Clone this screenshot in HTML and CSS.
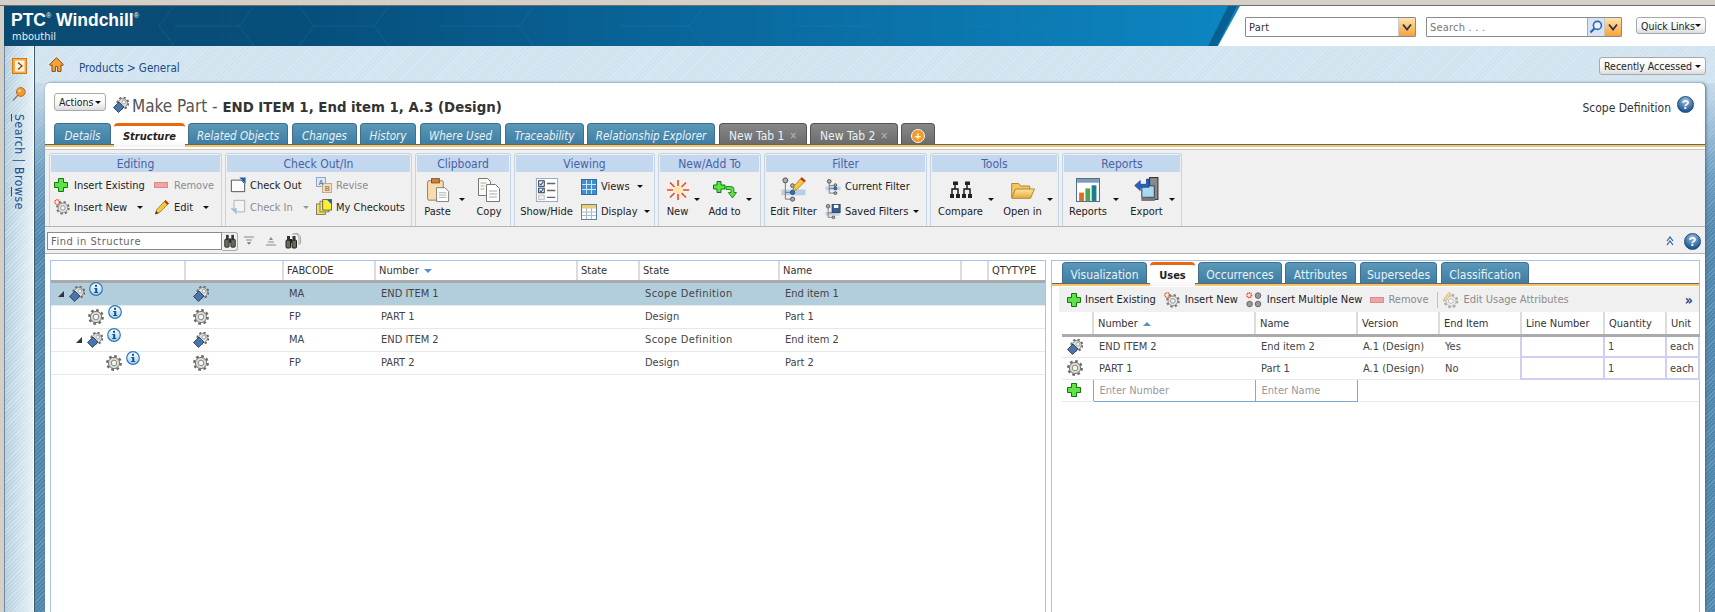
FILE: index.html
```html
<!DOCTYPE html>
<html lang="en">
<head>
    <meta charset="UTF-8">
    <title>Windchill - Make Part</title>
    <link rel="stylesheet" href="styles.css">
</head>
<body>
    <svg class="defs" aria-hidden="true">
        <defs>
            <linearGradient id="infoFill" x1="0" y1="0" x2="0" y2="1"><stop offset="0" stop-color="#ffffff"/><stop offset="1" stop-color="#a9d0ee"/></linearGradient>
            <linearGradient id="folderFill" x1="0" y1="0" x2="0" y2="1"><stop offset="0" stop-color="#fbe7a0"/><stop offset="1" stop-color="#e8a93c"/></linearGradient>
            <symbol id="gear" viewBox="0 0 16 16">
                <circle cx="8" cy="8" r="6.6" fill="none" stroke="#6a6a6a" stroke-width="2.6" stroke-dasharray="2.6 2.58"/>
                <circle cx="8" cy="8" r="5.6" fill="#dcdcd4" stroke="#777" stroke-width="1"/>
                <circle cx="8" cy="8" r="2.8" fill="#f4f4f0" stroke="#888" stroke-width="1"/>
            </symbol>
            <symbol id="part" viewBox="0 0 16 16">
                <circle cx="9.8" cy="6.2" r="5.4" fill="none" stroke="#6a6a6a" stroke-width="2.2" stroke-dasharray="2.2 2.04"/>
                <circle cx="9.8" cy="6.2" r="4.6" fill="#e2e2da" stroke="#777" stroke-width=".8"/>
                <circle cx="10.8" cy="5.2" r="1.8" fill="#f8f8f4" stroke="#888" stroke-width=".7"/>
                <polygon points="0.5,10.5 6,5 11,10 5.5,15.5" fill="#4b74a8" stroke="#1c3560" stroke-width=".8"/>
            </symbol>
            <symbol id="gearNew" viewBox="0 0 18 18">
                <circle cx="10" cy="10" r="6.4" fill="none" stroke="#777" stroke-width="2.6" stroke-dasharray="2.5 2.53"/>
                <circle cx="10" cy="10" r="5.4" fill="#e6e6e2" stroke="#888" stroke-width="1"/>
                <circle cx="10" cy="10" r="2.6" fill="#f6f6f2" stroke="#888" stroke-width="1"/>
                <circle cx="3.5" cy="3.5" r="2.6" fill="none" stroke="#e8431a" stroke-width="1.6" stroke-dasharray="1 .7"/>
            </symbol>
            <symbol id="gearsNew" viewBox="0 0 16 16">
                <g fill="#999" stroke="#555" stroke-width=".8"><circle cx="12" cy="3.6" r="2.8"/><circle cx="3.6" cy="12" r="2.8"/><circle cx="12" cy="12" r="2.8"/></g>
                <circle cx="3.2" cy="3.2" r="2.3" fill="none" stroke="#e8431a" stroke-width="1.6" stroke-dasharray="1 .6"/>
            </symbol>
            <symbol id="gearEdit" viewBox="0 0 18 18">
                <circle cx="9" cy="10" r="6" fill="none" stroke="#aaa" stroke-width="2.6" stroke-dasharray="2.4 2.31"/>
                <circle cx="9" cy="10" r="5" fill="#eee" stroke="#bbb"/>
                <circle cx="9" cy="10" r="2.4" fill="#f8f8f8" stroke="#bbb"/>
                <polygon points="2,8 7,1.5 9,3 4,9.5 1.5,10.5" fill="#f1dca0" stroke="#c8a878" stroke-width=".7"/>
            </symbol>
            <symbol id="info" viewBox="0 0 14 14">
                <circle cx="7" cy="7" r="6.3" fill="url(#infoFill)" stroke="#2c78b8" stroke-width="1.2"/>
                <rect x="6" y="2.8" width="2" height="2" fill="#14528f"/>
                <path d="M5.3 6h2.9v4h1v1.1H5.2V10h1V7.1h-.9z" fill="#14528f"/>
            </symbol>
            <symbol id="plus" viewBox="0 0 14 14">
                <polygon points="4.5,.5 9.5,.5 9.5,4.5 13.5,4.5 13.5,9.5 9.5,9.5 9.5,13.5 4.5,13.5 4.5,9.5 .5,9.5 .5,4.5 4.5,4.5" fill="#62e04a" stroke="#0d7a10"/>
            </symbol>
            <symbol id="minus" viewBox="0 0 14 14">
                <rect x=".5" y="4.5" width="13" height="5" fill="#f0a4a4" stroke="#d49090"/>
            </symbol>
            <symbol id="pencil" viewBox="0 0 18 18">
                <polygon points="13,1.5 16.5,5 6,15.5 1.5,17 3,12" fill="#f5c93c" stroke="#8c6414" stroke-width=".8"/>
                <polygon points="13,1.5 16.5,5 15,6.5 11.5,3" fill="#c8281e"/>
                <polygon points="1.5,17 2.5,13.5 5,16" fill="#333"/>
            </symbol>
            <symbol id="checkOut" viewBox="0 0 18 18">
                <path d="M1.5 3.5h11l4 4v9h-15z" fill="#fbfbfb" stroke="#444"/>
                <polygon points="10.5,.5 17.5,.5 17.5,7.5" fill="#1f5fa8"/>
            </symbol>
            <symbol id="checkIn" viewBox="0 0 18 18">
                <path d="M4.5 1.5h12v13h-8l-4-4z" fill="#f4f4f4" stroke="#aaa"/>
                <polygon points=".5,10.5 7.5,10.5 7.5,17.5" fill="#9fc0e0"/>
            </symbol>
            <symbol id="revise" viewBox="0 0 16 16">
                <rect x=".5" y=".5" width="9" height="9" fill="#dfe8f4" stroke="#8ea6c6"/>
                <rect x="6.5" y="6.5" width="9" height="9" fill="#f2dcc4" stroke="#c4a888"/>
                <text x="2.6" y="7.8" class="svg-letter" fill="#6a86ae">A</text>
                <text x="8.8" y="13.8" class="svg-letter" fill="#a88058">B</text>
            </symbol>
            <symbol id="myCheckouts" viewBox="0 0 18 18">
                <rect x=".5" y="5.5" width="10" height="12" fill="#f4e04a" stroke="#777"/>
                <rect x="4.5" y="2.5" width="10" height="12" fill="#f8ea50" stroke="#777"/>
                <path d="M7.5 .5h10v12H7.5z" fill="#ffee2a" stroke="#555"/>
                <polygon points="12,.5 17.5,.5 17.5,6" fill="#1f5fa8"/>
            </symbol>
            <symbol id="paste" viewBox="0 0 24 26">
                <rect x=".7" y="3" width="17" height="21" rx="1.5" fill="#f7dcb0" stroke="#9c7440"/>
                <rect x="5" y=".7" width="8.5" height="4.6" fill="#c8843c" stroke="#80541e"/>
                <path d="M10.5 10.5h9l4 4v11h-13z" fill="#fff" stroke="#777"/>
                <path d="M13 16h8M13 18.5h8M13 21h8" stroke="#aaa"/>
            </symbol>
            <symbol id="copy" viewBox="0 0 22 24">
                <path d="M.5 .5h9l3 3v14H.5z" fill="#fbfbf6" stroke="#777"/>
                <path d="M8.5 6.5h9l4 4v13h-13z" fill="#fff" stroke="#777"/>
                <path d="M2.5 5h6M2.5 8h4M2.5 11h4M11 13h8M11 16h8M11 19h8" stroke="#aaa"/>
            </symbol>
            <symbol id="showHide" viewBox="0 0 24 26">
                <rect x=".5" y=".5" width="23" height="25" fill="#fff" stroke="#8ea8c8"/>
                <rect x="3" y="3" width="6" height="6" fill="#fff" stroke="#223"/>
                <rect x="3" y="11" width="6" height="5" fill="#fff" stroke="#223"/>
                <rect x="3" y="18.5" width="6" height="5" fill="#eee" stroke="#bbb"/>
                <path d="M4 6l1.5 1.5L8 4M4 13.5l1.5 1.5L8 12" stroke="#1f5fa8" fill="none" stroke-width="1.2"/>
                <path d="M12 6h9M12 13.5h9M12 21h9" stroke="#666" stroke-width="1.6"/>
            </symbol>
            <symbol id="views" viewBox="0 0 16 16">
                <rect x=".5" y=".5" width="15" height="15" fill="#3f8fd0" stroke="#2a6ca8"/>
                <path d="M5.5 1v14M10.5 1v14M1 5.5h14M1 10.5h14" stroke="#cfe4f4"/>
            </symbol>
            <symbol id="display" viewBox="0 0 16 16">
                <rect x=".5" y=".5" width="15" height="15" fill="#fff" stroke="#5a82aa"/>
                <rect x="1" y="1" width="14" height="3.5" fill="#f2cc6a"/>
                <path d="M5.5 4v11M10.5 4v11M1 8h14M1 11.5h14" stroke="#a8bccc"/>
            </symbol>
            <symbol id="burst" viewBox="0 0 22 20">
                <g stroke-width="1.6" stroke="#f04a1a"><path d="M11 0v6M11 14v6M0 10h6M16 10h6M3 2.5l4.5 4.5M14.5 13l4.5 4.5M19 2.5l-4.5 4.5M7.5 13L3 17.5"/></g>
                <circle cx="11" cy="10" r="3.6" fill="#ffe69a"/>
            </symbol>
            <symbol id="addTo" viewBox="0 0 24 18">
                <polygon points="4,.5 8,.5 8,4 12,4 12,8 8,8 8,11.5 4,11.5 4,8 .5,8 .5,4 4,4" fill="#62e04a" stroke="#0d7a10"/>
                <path d="M13 5.5h5a3 3 0 0 1 3 3v3h2.5L19.5 17l-4.2-5.5H18V9.4a.9.9 0 0 0-.9-.9H13z" fill="#62e04a" stroke="#0d7a10" stroke-width=".8"/>
            </symbol>
            <symbol id="editFilter" viewBox="0 0 26 26">
                <rect x="0" y="13" width="25" height="6" fill="#b8cde4"/>
                <path d="M4 5v18M4 16h6M4 23h6" stroke="#777" fill="none"/>
                <circle cx="4" cy="3.5" r="2.6" fill="#aaa" stroke="#555"/>
                <circle cx="11.5" cy="16" r="2.2" fill="#2f6fc0" stroke="#1a4a90"/>
                <circle cx="11.5" cy="23" r="2.2" fill="#aaa" stroke="#555"/>
                <circle cx="11.5" cy="9" r="2" fill="#aaa" stroke="#555"/>
                <polygon points="21,.5 25,4 16,13 12,14 13,9.5" fill="#f5c93c" stroke="#8c6414" stroke-width=".7"/>
                <polygon points="21,.5 25,4 23.5,5.5 19.5,2" fill="#c8281e"/>
            </symbol>
            <symbol id="currentFilter" viewBox="0 0 16 17">
                <rect x="0" y="8" width="16" height="4" fill="#c0d2e6"/>
                <path d="M4 3v12M4 7h6M4 10h6M4 15h6" stroke="#777" fill="none"/>
                <circle cx="4" cy="2.5" r="2" fill="#aaa" stroke="#555"/>
                <circle cx="10.5" cy="6.5" r="1.5" fill="#aaa" stroke="#555"/>
                <circle cx="10.5" cy="10" r="1.5" fill="#2f6fc0" stroke="#1a4a90"/>
                <circle cx="10.5" cy="15" r="1.5" fill="#aaa" stroke="#555"/>
            </symbol>
            <symbol id="savedFilter" viewBox="0 0 17 18">
                <rect x="0" y="9" width="16" height="4" fill="#c0d2e6"/>
                <path d="M3 3v12M3 10h5M3 15h5" stroke="#777" fill="none"/>
                <circle cx="3" cy="2.5" r="2" fill="#aaa" stroke="#555"/>
                <circle cx="9" cy="15" r="1.5" fill="#aaa" stroke="#555"/>
                <rect x="7.5" y=".5" width="9" height="9" fill="#39608e" stroke="#22406a"/>
                <rect x="9.5" y="1" width="5" height="3.5" fill="#fff"/>
            </symbol>
            <symbol id="compare" viewBox="0 0 24 18">
                <g fill="none" stroke="#111" stroke-width="1.4">
                    <path d="M6 3v5M3 14V8h6v6M18 3v5M15 14V8h6v6"/>
                </g>
                <g fill="#222"><rect x="4" y=".5" width="5" height="3.5"/><rect x="16" y=".5" width="5" height="3.5"/><rect x="1" y="13" width="4" height="4"/><rect x="7" y="13" width="4" height="4"/><rect x="13" y="13" width="4" height="4"/><rect x="19" y="13" width="4" height="4"/></g>
            </symbol>
            <symbol id="folder" viewBox="0 0 24 18">
                <path d="M.7 16.5V2.5h7l2 2.5h9v3" fill="#f3c660" stroke="#b8862c"/>
                <polygon points="4.5,8 23.5,8 19.5,17.3 .7,17.3" fill="url(#folderFill)" stroke="#b8862c"/>
            </symbol>
            <symbol id="reports" viewBox="0 0 23 23">
                <rect x=".5" y=".5" width="22" height="22" fill="#fff" stroke="#51708e"/>
                <rect x="1" y="1" width="21" height="3.5" fill="#7e9cb8"/>
                <rect x="3" y="14" width="4.6" height="8" fill="#e06a24"/>
                <rect x="9" y="10" width="4.6" height="12" fill="#4aa84a"/>
                <rect x="15" y="7" width="4.6" height="15" fill="#1e7f8c"/>
            </symbol>
            <symbol id="export" viewBox="0 0 25 24">
                <rect x="15" y=".5" width="8" height="21" fill="#8a8a8a" stroke="#333"/>
                <rect x="7.5" y="8.5" width="12" height="11" fill="#a8d8f4" stroke="#444"/>
                <rect x="7" y="20" width="13" height="3" fill="#777"/>
                <path d="M12 2v5H6V3.5L.7 8.2 6 13V9.8h8.4V2z" fill="#2a62c0" stroke="#123a80" stroke-width=".7"/>
            </symbol>
            <symbol id="binoc" viewBox="0 0 14 16">
                <rect x="1" y="6" width="5" height="9" rx="1" fill="#6a6a5a" stroke="#222"/>
                <rect x="8" y="6" width="5" height="9" rx="1" fill="#6a6a5a" stroke="#222"/>
                <rect x="2.5" y="1" width="3" height="6" fill="#333"/>
                <rect x="8.5" y="1" width="3" height="6" fill="#333"/>
                <rect x="6" y="5" width="2" height="5" fill="#222"/>
            </symbol>
            <symbol id="binocs" viewBox="0 0 16 16">
                <path d="M7 1h5l2 3v8M9 .5h4l2.5 3.500v7" fill="none" stroke="#aaa"/>
                <rect x="1" y="7" width="4.5" height="8" rx="1" fill="#6a6a5a" stroke="#222"/>
                <rect x="7" y="7" width="4.5" height="8" rx="1" fill="#6a6a5a" stroke="#222"/>
                <rect x="2" y="3" width="3" height="5" fill="#333"/>
                <rect x="7.5" y="3" width="3" height="5" fill="#333"/>
                <rect x="5" y="6" width="2" height="4" fill="#222"/>
            </symbol>
            <symbol id="home" viewBox="0 0 15 15">
                <path d="M7.5 .7L.6 7.6l1.4 1.2 1-1V14.400h3.4V9.6h2.2v4.800H12V7.800l1 1 1.400-1.200z" fill="#f2a33a" stroke="#8e4a08"/>
            </symbol>
            <symbol id="toggle" viewBox="0 0 15 16">
                <rect x=".5" y=".5" width="14" height="15" fill="#f4a84a" stroke="#d07a18"/>
                <rect x="3" y="2.5" width="9.5" height="11" fill="#fff4e0"/>
                <path d="M6 4.5L10 8l-4 3.5" fill="none" stroke="#8a4a0c" stroke-width="1.4"/>
            </symbol>
            <symbol id="pin" viewBox="0 0 14 14">
                <path d="M7 7L1 13.5" stroke="#8c7a5c" stroke-width="1.4"/>
                <circle cx="8.8" cy="5" r="4.4" fill="#ee9a3a" stroke="#c06c14"/>
                <circle cx="7.6" cy="3.8" r="1.3" fill="#fbd9a0"/>
            </symbol>
            <symbol id="lens" viewBox="0 0 14 14">
                <circle cx="8.4" cy="5.4" r="4" fill="#e8f2fb" stroke="#2a68b4" stroke-width="1.6"/>
                <path d="M5.4 8.4L1.4 12.6" stroke="#2a68b4" stroke-width="2.2"/>
            </symbol>
            <symbol id="vee" viewBox="0 0 10 8">
                <path d="M1 1.5L5 6.5l4-5" fill="none" stroke="#333" stroke-width="1.8"/>
            </symbol>
        </defs>
    </svg>

    <div class="top-strip"></div>
    <div class="masthead">
        <div class="brand">
            <svg class="hex" viewBox="0 0 1236 40" preserveAspectRatio="none" aria-hidden="true">
                <path d="M170 0l-15 20 15 20M250 0l-15 20h-65M250 40l-15-20M385 0l-15 20 15 20M370 20h-60M310 20l-15-20M310 20l-15 20M530 0l-15 20 15 20M515 20h-80M700 0l-15 20 15 20M685 20h-70M880 0l-15 20 15 20M865 20h-75M1050 0l-15 20 15 20M1035 20h-70" fill="none" stroke="#2d8cc0" stroke-opacity=".25"/>
                <polygon points="1224,0 1233,0 1213,40 1204,40" fill="#0a5f92"/>
            </svg>
            <div class="logo">PTC<sup>®</sup> Windchill<sup>®</sup></div>
            <div class="user">mbouthil</div>
        </div>
        <div class="head-tools">
            <div class="combo combo-type">
                <input class="combo-input" value="Part">
                <span class="orange-btn"><svg class="vee"><use href="#vee"/></svg></span>
            </div>
            <div class="combo combo-search">
                <input class="combo-input" placeholder="Search . . .">
                <span class="lens-btn"><svg class="i14"><use href="#lens"/></svg></span>
                <span class="orange-btn"><svg class="vee"><use href="#vee"/></svg></span>
            </div>
            <div class="menu-btn quick">Quick Links <i class="caret"></i></div>
        </div>
    </div>

    <div class="shell">
        <aside class="rail">
            <svg class="rail-toggle"><use href="#toggle"/></svg>
            <svg class="rail-pin"><use href="#pin"/></svg>
            <div class="rail-text"><u>S</u>earch | Bro<u>w</u>se</div>
        </aside>

        <div class="workspace">
            <div class="crumbs">
                <svg class="i15"><use href="#home"/></svg>
                <div class="crumb-links">Products &gt; General</div>
                <div class="menu-btn recent">Recently Accessed <i class="caret"></i></div>
            </div>

            <div class="card">
                <div class="title-row">
                    <div class="menu-btn actions">Actions <i class="caret"></i></div>
                    <svg class="i16 title-icon"><use href="#part"/></svg>
                    <div class="title">Make Part - <b>END ITEM 1, End item 1, A.3 (Design)</b></div>
                    <div class="scope">Scope Definition</div>
                    <span class="help">?</span>
                </div>

                <div class="tabs main-tabs">
                    <div class="tab t-details">Details</div>
                    <div class="tab t-structure active">Structure</div>
                    <div class="tab t-related">Related Objects</div>
                    <div class="tab t-changes">Changes</div>
                    <div class="tab t-history">History</div>
                    <div class="tab t-used">Where Used</div>
                    <div class="tab t-trace">Traceability</div>
                    <div class="tab t-rel">Relationship Explorer</div>
                    <div class="tab grey t-new1">New Tab 1 <span class="x">×</span></div>
                    <div class="tab grey t-new2">New Tab 2 <span class="x">×</span></div>
                    <div class="tab grey t-add"><span class="add-dot">+</span></div>
                </div>
                <div class="gold"></div>

                <div class="ribbon">
                    <section class="group g-edit">
                        <h3>Editing</h3>
                        <div class="group-body">
                            <div class="stack tight w-100">
                                <div class="item"><span class="ico"><svg class="i14"><use href="#plus"/></svg></span>Insert Existing</div>
                                <div class="item"><span class="ico"><svg class="i16"><use href="#gearNew"/></svg></span>Insert New<i class="caret gap10"></i></div>
                            </div>
                            <div class="stack tight">
                                <div class="item off"><span class="ico"><svg class="i14"><use href="#minus"/></svg></span>Remove</div>
                                <div class="item"><span class="ico"><svg class="i16"><use href="#pencil"/></svg></span>Edit<i class="caret gap10"></i></div>
                            </div>
                        </div>
                    </section>
                    <section class="group g-check">
                        <h3>Check Out/In</h3>
                        <div class="group-body">
                            <div class="stack tight w-86">
                                <div class="item"><span class="ico"><svg class="i16"><use href="#checkOut"/></svg></span>Check Out</div>
                                <div class="item off"><span class="ico"><svg class="i16"><use href="#checkIn"/></svg></span>Check In<i class="caret gap10 pale"></i></div>
                            </div>
                            <div class="stack tight">
                                <div class="item off"><span class="ico"><svg class="i16"><use href="#revise"/></svg></span>Revise</div>
                                <div class="item"><span class="ico"><svg class="i16"><use href="#myCheckouts"/></svg></span>My Checkouts</div>
                            </div>
                        </div>
                    </section>
                    <section class="group g-clip">
                        <h3>Clipboard</h3>
                        <div class="group-body bigs">
                            <div class="pair">
                                <div class="big w-31"><span class="big-ico"><svg class="b24"><use href="#paste"/></svg></span>Paste</div>
                                <i class="caret big-caret"></i>
                            </div>
                            <div class="big w-26"><span class="big-ico"><svg class="b24"><use href="#copy"/></svg></span>Copy</div>
                        </div>
                    </section>
                    <section class="group g-view">
                        <h3>Viewing</h3>
                        <div class="group-body bigs">
                            <div class="big w-51"><span class="big-ico"><svg class="b24"><use href="#showHide"/></svg></span>Show/Hide</div>
                            <div class="stack">
                                <div class="item"><span class="ico"><svg class="i16"><use href="#views"/></svg></span>Views<i class="caret gap7"></i></div>
                                <div class="item"><span class="ico"><svg class="i16"><use href="#display"/></svg></span>Display<i class="caret gap7"></i></div>
                            </div>
                        </div>
                    </section>
                    <section class="group g-new">
                        <h3>New/Add To</h3>
                        <div class="group-body bigs">
                            <div class="pair">
                                <div class="big w-21"><span class="big-ico"><svg class="b22"><use href="#burst"/></svg></span>New</div>
                                <i class="caret big-caret"></i>
                            </div>
                            <div class="pair">
                                <div class="big w-31"><span class="big-ico"><svg class="b24"><use href="#addTo"/></svg></span>Add to</div>
                                <i class="caret big-caret"></i>
                            </div>
                        </div>
                    </section>
                    <section class="group g-filter">
                        <h3>Filter</h3>
                        <div class="group-body bigs">
                            <div class="big w-45"><span class="big-ico"><svg class="b26"><use href="#editFilter"/></svg></span>Edit Filter</div>
                            <div class="stack">
                                <div class="item"><span class="ico"><svg class="i16"><use href="#currentFilter"/></svg></span>Current Filter</div>
                                <div class="item"><span class="ico"><svg class="i16"><use href="#savedFilter"/></svg></span>Saved Filters<i class="caret gap5"></i></div>
                            </div>
                        </div>
                    </section>
                    <section class="group g-tools">
                        <h3>Tools</h3>
                        <div class="group-body bigs">
                            <div class="pair">
                                <div class="big w-43"><span class="big-ico"><svg class="b24"><use href="#compare"/></svg></span>Compare</div>
                                <i class="caret big-caret"></i>
                            </div>
                            <div class="pair">
                                <div class="big w-37"><span class="big-ico"><svg class="b24"><use href="#folder"/></svg></span>Open in</div>
                                <i class="caret big-caret"></i>
                            </div>
                        </div>
                    </section>
                    <section class="group g-reports">
                        <h3>Reports</h3>
                        <div class="group-body bigs">
                            <div class="pair">
                                <div class="big w-38"><span class="big-ico"><svg class="b24"><use href="#reports"/></svg></span>Reports</div>
                                <i class="caret big-caret"></i>
                            </div>
                            <div class="pair">
                                <div class="big w-33"><span class="big-ico"><svg class="b26"><use href="#export"/></svg></span>Export</div>
                                <i class="caret big-caret"></i>
                            </div>
                        </div>
                    </section>
                </div>

                <div class="find-bar">
                    <input class="find-input" placeholder="Find in Structure">
                    <span class="find-btn"><svg class="i14"><use href="#binoc"/></svg></span>
                    <span class="find-arrow">
                        <svg class="i10" viewBox="0 0 10 10"><path d="M0 1h10M2 4h6M3.500 7h3" stroke="#888" fill="none"/><path d="M3 6l2 3 2-3z" fill="#888"/></svg>
                    </span>
                    <span class="find-arrow">
                        <svg class="i10" viewBox="0 0 10 10"><path d="M0 9h10M2 6h6" stroke="#888" fill="none"/><path d="M3 4l2-3 2 3z" fill="#888"/></svg>
                    </span>
                    <span class="find-multi"><svg class="i16"><use href="#binocs"/></svg></span>
                    <span class="collapse">
                        <svg class="i10" viewBox="0 0 10 10"><path d="M2 5l3-4 3 4M2 9l3-4 3 4" fill="none" stroke="#2a62a0" stroke-width="1.2"/></svg>
                    </span>
                    <span class="help">?</span>
                </div>

                <div class="panes">
                    <div class="pane left-pane">
                        <table class="grid tree-grid">
                            <thead>
                                <tr><th></th><th></th><th>FABCODE</th><th>Number <i class="sort down"></i></th><th>State</th><th>State</th><th>Name</th><th></th><th>QTYTYPE</th></tr>
                            </thead>
                            <tbody>
                                <tr class="selected">
                                    <td><div class="tree lvl0"><i class="twist"></i><svg class="i16"><use href="#part"/></svg><svg class="i14 info"><use href="#info"/></svg></div></td>
                                    <td><svg class="i16 col-ico"><use href="#part"/></svg></td><td>MA</td><td>END ITEM 1</td><td></td><td class="scope-cell">Scope Definition</td><td>End item 1</td><td></td><td></td>
                                </tr>
                                <tr>
                                    <td><div class="tree lvl1"><svg class="i16"><use href="#gear"/></svg><svg class="i14 info"><use href="#info"/></svg></div></td>
                                    <td><svg class="i16 col-ico"><use href="#gear"/></svg></td><td>FP</td><td>PART 1</td><td></td><td>Design</td><td>Part 1</td><td></td><td></td>
                                </tr>
                                <tr>
                                    <td><div class="tree lvl2"><i class="twist"></i><svg class="i16"><use href="#part"/></svg><svg class="i14 info"><use href="#info"/></svg></div></td>
                                    <td><svg class="i16 col-ico"><use href="#part"/></svg></td><td>MA</td><td>END ITEM 2</td><td></td><td class="scope-cell">Scope Definition</td><td>End item 2</td><td></td><td></td>
                                </tr>
                                <tr>
                                    <td><div class="tree lvl3"><svg class="i16"><use href="#gear"/></svg><svg class="i14 info"><use href="#info"/></svg></div></td>
                                    <td><svg class="i16 col-ico"><use href="#gear"/></svg></td><td>FP</td><td>PART 2</td><td></td><td>Design</td><td>Part 2</td><td></td><td></td>
                                </tr>
                            </tbody>
                        </table>
                    </div>

                    <div class="pane right-pane">
                        <div class="tabs sub-tabs">
                            <div class="tab t-vis">Visualization</div>
                            <div class="tab t-uses active">Uses</div>
                            <div class="tab t-occ">Occurrences</div>
                            <div class="tab t-attr">Attributes</div>
                            <div class="tab t-super">Supersedes</div>
                            <div class="tab t-class">Classification</div>
                        </div>
                        <div class="gold"></div>
                        <div class="uses-bar">
                            <span class="ubtn u-exist"><svg class="i14"><use href="#plus"/></svg>Insert Existing</span>
                            <span class="ubtn u-new"><svg class="i16"><use href="#gearNew"/></svg>Insert New</span>
                            <span class="ubtn u-multi"><svg class="i16"><use href="#gearsNew"/></svg>Insert Multiple New</span>
                            <span class="ubtn u-rem off"><svg class="i14"><use href="#minus"/></svg>Remove</span>
                            <span class="ubar-sep"></span>
                            <span class="ubtn off"><svg class="i18"><use href="#gearEdit"/></svg>Edit Usage Attributes</span>
                            <span class="more">»</span>
                        </div>
                        <table class="grid uses-grid">
                            <thead>
                                <tr><th></th><th>Number <i class="sort up"></i></th><th>Name</th><th>Version</th><th>End Item</th><th>Line Number</th><th>Quantity</th><th>Unit</th></tr>
                            </thead>
                            <tbody>
                                <tr>
                                    <td><svg class="i16"><use href="#part"/></svg></td><td class="num-cell">END ITEM 2</td><td>End item 2</td><td>A.1 (Design)</td><td>Yes</td>
                                    <td class="edit"></td><td class="edit">1</td><td class="edit">each</td>
                                </tr>
                                <tr>
                                    <td><svg class="i16"><use href="#gear"/></svg></td><td class="num-cell">PART 1</td><td>Part 1</td><td>A.1 (Design)</td><td>No</td>
                                    <td class="edit"></td><td class="edit">1</td><td class="edit">each</td>
                                </tr>
                                <tr class="add-row">
                                    <td><svg class="i14"><use href="#plus"/></svg></td>
                                    <td class="enter">Enter Number</td><td class="enter">Enter Name</td><td colspan="5"></td>
                                </tr>
                            </tbody>
                        </table>
                    </div>
                </div>
            </div>
        </div>
    </div>
</body>
</html>
```

FILE: styles.css
```css
*{
    box-sizing:border-box;
}
html,body{
    margin:0;
    padding:0;
    height:612px;
    overflow:hidden;
}
body{
    display:flex;
    flex-direction:column;
    background:#d4d0c8;
    font-family:"DejaVu Sans Condensed","DejaVu Sans",sans-serif;
    font-stretch:condensed;
    font-size:11px;
    color:#333;
}
svg{
    display:block;
    flex:none;
}
.defs{
    width:0;
    height:0;
    position:absolute;
}
.svg-letter{
    font-size:7px;
    font-family:"Liberation Sans",sans-serif;
    font-weight:bold;
}
.i10{width:10px;height:10px;}
.i14{width:14px;height:14px;}
.i15{width:15px;height:15px;}
.i16{width:16px;height:16px;}
.i18{width:18px;height:18px;}
.b22{width:22px;height:20px;}
.b24{width:24px;height:24px;}
.b26{width:26px;height:25px;}

.top-strip{
    height:6px;
    flex:none;
    border-bottom:1px solid #6e6e6e;
}

/* header */
.masthead{
    height:40px;
    flex:none;
    margin-left:4px;
    background:#fff;
    display:flex;
}
.brand{
    width:1236px;
    position:relative;
    padding:4px 0 0 7px;
    color:#fff;
    background:linear-gradient(90deg,#0b4a70 0,#064f7c 25%,#0a6a9f 60%,#0d86c2 100%);
    clip-path:polygon(0 0,100% 0,1214px 100%,0 100%);
}
.hex{
    position:absolute;
    left:0;
    top:0;
    width:100%;
    height:100%;
}
.logo{
    position:relative;
    font-family:"Liberation Sans",sans-serif;
    font-stretch:normal;
    font-weight:bold;
    font-size:17.5px;
    line-height:20px;
}
.logo sup{
    font-size:7px;
    line-height:0;
    vertical-align:8px;
    font-weight:normal;
}
.user{
    position:relative;
    font-size:11px;
    line-height:14px;
    margin-left:1px;
    color:#e4eff6;
}
.head-tools{
    flex:1;
    display:flex;
    align-items:flex-start;
    padding:11px 9px 0 5px;
}
.combo{
    display:flex;
    height:20px;
    border:1px solid #8a8a8a;
    background:#fff;
    border-radius:1px;
}
.combo-type{
    width:171px;
    margin-right:10px;
}
.combo-search{
    width:196px;
    margin-right:14px;
}
.combo-input{
    flex:1;
    min-width:0;
    border:0;
    outline:0;
    padding:0 3px;
    font:inherit;
    font-size:11px;
    letter-spacing:.2px;
    color:#333;
    background:none;
}
.combo-input::placeholder{
    color:#777;
}
.orange-btn{
    width:17px;
    display:flex;
    align-items:center;
    justify-content:center;
    background:linear-gradient(#fde3b0,#f6a23c);
    border-left:1px solid #c8c8c8;
}
.lens-btn{
    width:17px;
    display:flex;
    align-items:center;
    justify-content:center;
    background:#d8e4f2;
    border-left:1px solid #aaa;
}
.vee{
    width:10px;
    height:8px;
}
.menu-btn{
    display:flex;
    align-items:center;
    justify-content:space-between;
    height:18px;
    padding:0 4px;
    border:1px solid #a8a8a8;
    border-radius:3px;
    background:linear-gradient(#fff 0,#f6f6f6 60%,#dcdcdc 100%);
    color:#222;
    font-size:10.5px;
    white-space:nowrap;
}
.quick{
    width:70px;
    height:17px;
}
.recent{
    width:107px;
    margin-left:auto;
}
.actions{
    width:52px;
}
.caret{
    display:inline-block;
    flex:none;
    width:0;
    height:0;
    border-left:3px solid transparent;
    border-right:3px solid transparent;
    border-top:3px solid #111;
}
.caret.pale{
    border-top-color:#999;
}

/* left rail and page background */
.shell{
    flex:1;
    min-height:0;
    display:flex;
    margin-left:4px;
}
.rail{
    width:30px;
    flex:none;
    display:flex;
    flex-direction:column;
    align-items:center;
    padding-top:12px;
    border-left:1px solid #6e8aa0;
    border-right:1px solid #fff;
    background:
        repeating-linear-gradient(135deg,rgba(255,255,255,.3) 0 1px,transparent 1px 3px),
        linear-gradient(90deg,#b4cedf,#e4eff5);
}
.rail-toggle{
    width:15px;
    height:16px;
}
.rail-pin{
    width:14px;
    height:14px;
    margin-top:13px;
}
.rail-text{
    margin-top:13px;
    writing-mode:vertical-rl;
    color:#1c4f8e;
    font-size:12px;
    letter-spacing:.6px;
    line-height:14px;
}
.workspace{
    flex:1;
    min-width:0;
    display:flex;
    flex-direction:column;
    border-left:1px solid #3c5a72;
    background:
        repeating-linear-gradient(135deg,rgba(255,255,255,.16) 0 1px,transparent 1px 3px),
        linear-gradient(#d3e5f0 0,#c3d9e8 40px,#6b9dc0 130px,#4f86ad 190px);
}
.crumbs{
    height:37px;
    flex:none;
    display:flex;
    align-items:flex-start;
    padding:11px 9px 0 14px;
    background:
        repeating-linear-gradient(135deg,rgba(255,255,255,.2) 0 1px,transparent 1px 3px),
        #d0e3ef;
}
.crumb-links{
    margin-left:15px;
    margin-top:4px;
    line-height:15px;
    font-size:11.5px;
    color:#1c4a8a;
}

/* card */
.card{
    flex:1;
    min-height:0;
    display:flex;
    flex-direction:column;
    width:1660px;
    margin-left:10px;
    background:#fff;
    border-radius:5px 5px 0 0;
    box-shadow:1px 0 3px #4d6f8a;
}
.title-row{
    height:40px;
    flex:none;
    display:flex;
    align-items:flex-start;
    padding:10px 11px 0 9px;
}
.title-icon{
    margin:4px 0 0 7px;
}
.title{
    margin-left:3px;
    margin-top:1px;
    font-size:17px;
    line-height:24px;
    color:#555;
}
.title b{
    font-size:14.8px;
    color:#333;
}
.scope{
    margin-left:auto;
    margin-top:8px;
    font-size:12px;
    line-height:14px;
}
.help{
    width:17px;
    height:17px;
    margin-left:6px;
    margin-top:3px;
    border-radius:50%;
    background:radial-gradient(circle at 50% 25%,#9fc0de,#205a94 75%);
    border:1px solid #1b4c7e;
    color:#fff;
    font:bold 13px/15px "Liberation Sans",sans-serif;
    text-align:center;
}

/* tabs */
.tabs{
    display:flex;
    align-items:flex-end;
    flex:none;
}
.main-tabs{
    height:21px;
    margin-left:9px;
    gap:3px;
}
.tab{
    height:100%;
    display:flex;
    align-items:center;
    justify-content:center;
    padding-top:3px;
    border:1px solid #3f6f8a;
    border-bottom:0;
    border-radius:4px 4px 0 0;
    background:linear-gradient(#5b98b8,#3e7ea4);
    color:#e9f2f7;
    font-size:12px;
    white-space:nowrap;
}
.main-tabs .tab{
    font-style:italic;
    font-size:11.5px;
}
.main-tabs .grey{
    font-style:normal;
    font-size:12px;
}
.tab.active,
.main-tabs .tab.active{
    position:relative;
    z-index:1;
    height:24px;
    margin-bottom:-3px;
    padding-top:0;
    border:0;
    border-top:3px solid #e8680c;
    background:linear-gradient(#fff 70%,#f4f4f4);
    color:#222;
    font-weight:bold;
    font-size:11px;
}
.tab.grey{
    border-color:#555;
    background:linear-gradient(#888,#6c6c6c);
    gap:5px;
}
.x{
    color:#bbb;
    font-size:10px;
}
.add-dot{
    width:14px;
    height:14px;
    border-radius:50%;
    background:#f39a2e;
    border:1px solid #fff3e0;
    color:#fff;
    font:bold 11px/12px "Liberation Sans",sans-serif;
    text-align:center;
}
.t-details{width:57px;}
.t-structure{width:71px;}
.t-related{width:100px;}
.t-changes{width:65px;margin-left:1px;}
.t-history{width:56px;}
.t-used{width:81px;margin-left:1px;}
.t-trace{width:79px;margin-left:1px;}
.t-rel{width:128px;}
.t-new1{width:88px;margin-left:1px;}
.t-new2{width:88px;}
.t-add{width:34px;}
.gold{
    height:3px;
    flex:none;
    border-top:1px solid #666;
    background:#f4c566;
}

/* ribbon */
.ribbon{
    height:78px;
    flex:none;
    display:flex;
    gap:3px;
    margin-top:2px;
    padding:3px 0 0 4px;
    background:#f0f0f0;
    border-top:1px solid #c8c8c8;
    border-bottom:1px solid #b4b4b4;
}
.group{
    height:100%;
    padding:1px;
    border:1px solid #c4d4e6;
    border-bottom:0;
    border-radius:3px 3px 0 0;
    display:flex;
    flex-direction:column;
}
.group h3{
    margin:0;
    height:17px;
    flex:none;
    background:#c3d7ee;
    color:#4a62a4;
    font-size:12px;
    font-weight:normal;
    line-height:18px;
    text-align:center;
}
.group-body{
    flex:1;
    display:flex;
    padding:2px 0 0 3px;
}
.group-body.bigs{
    padding-left:5px;
    gap:11px;
}
.g-new .group-body.bigs{
    padding-left:7px;
    gap:9px;
}
.g-tools .group-body.bigs{
    padding-left:7px;
    gap:10px;
}
.bigs .stack{
    margin-left:-2px;
}
.g-edit{width:173px;}
.g-check{width:187px;}
.g-clip{width:96px;}
.g-view{width:141px;}
.g-new{width:103px;}
.g-filter{width:163px;}
.g-tools{width:129px;}
.g-reports{width:120px;}
.w-21{width:21px;}
.w-26{width:26px;}
.w-31{width:31px;}
.w-33{width:33px;}
.w-37{width:37px;}
.w-38{width:38px;}
.w-43{width:43px;}
.w-45{width:45px;}
.w-51{width:51px;}
.w-86{width:86px;}
.w-100{width:100px;}
.stack{
    display:flex;
    flex-direction:column;
}
.item{
    height:25px;
    display:flex;
    align-items:center;
    white-space:nowrap;
    color:#222;
}
.tight .item{
    height:22px;
}
.ico{
    width:20px;
    display:flex;
    justify-content:flex-start;
    flex:none;
}
.off,
.item.off{
    color:#8c8c8c;
}
.gap5{margin-left:5px;}
.gap7{margin-left:7px;}
.gap10{margin-left:10px;}
.pair{
    display:flex;
    gap:6px;
}
.big{
    display:flex;
    flex-direction:column;
    align-items:center;
    white-space:nowrap;
    color:#222;
}
.big-ico{
    height:31px;
    display:flex;
    align-items:center;
    justify-content:center;
}
.big-caret{
    margin-top:24px;
}

/* find bar */
.find-bar{
    height:27px;
    flex:none;
    display:flex;
    align-items:center;
    padding:2px 4px 0 2px;
    background:#f0f0f0;
    border-bottom:1px solid #b4b4b4;
}
.find-input{
    width:175px;
    height:18px;
    padding:0 3px;
    border:1px solid #8a8a8a;
    outline:0;
    font:inherit;
    font-size:11px;
    letter-spacing:.5px;
}
.find-input::placeholder{
    color:#666;
}
.find-btn{
    width:16px;
    height:19px;
    display:flex;
    align-items:center;
    justify-content:center;
    border:1px solid #aaa;
    border-left:0;
    border-radius:0 3px 3px 0;
}
.find-arrow{
    margin-left:6px;
    margin-right:6px;
}
.find-multi{
    margin-left:3px;
}
.collapse{
    margin-left:auto;
}
.find-bar .help{
    margin:0 0 0 9px;
}

/* panes */
.panes{
    flex:1;
    min-height:0;
    display:flex;
    gap:5px;
    padding:6px 5px 0 5px;
}
.pane{
    border:1px solid #a6c4ea;
    border-bottom:0;
    background:#fff;
}
.left-pane{
    width:996px;
}
.right-pane{
    width:649px;
    padding-top:1px;
}
.grid{
    border-collapse:collapse;
    table-layout:fixed;
    color:#444;
}
.grid th{
    height:20px;
    padding:1px 0 0 3px;
    text-align:left;
    font-weight:normal;
    color:#333;
    font-size:11px;
    border-left:2px solid #dcdcdc;
    border-bottom:3px solid #aaa;
    white-space:nowrap;
}
.grid th:first-child{
    border-left:0;
}
.grid td{
    height:23px;
    padding:0 0 0 6px;
    border-bottom:1px solid #e8e8e8;
    white-space:nowrap;
}
.tree-grid{
    width:994px;
}
.tree-grid th:nth-child(1){width:134px;}
.tree-grid th:nth-child(2){width:98px;}
.tree-grid th:nth-child(3){width:92px;}
.tree-grid th:nth-child(4){width:202px;}
.tree-grid th:nth-child(5){width:62px;}
.tree-grid th:nth-child(6){width:140px;}
.tree-grid th:nth-child(7){width:182px;}
.tree-grid th:nth-child(8){width:27px;}
.tree-grid th:nth-child(9){width:57px;}
.tree-grid td:first-child{
    padding:0;
}
.selected td{
    background:#b2cddc;
}
.scope-cell{
    letter-spacing:.4px;
}
.tree{
    display:flex;
    align-items:center;
    height:22px;
}
.lvl0{padding-left:7px;}
.lvl1{padding-left:37px;}
.lvl2{padding-left:25px;}
.lvl3{padding-left:55px;}
.twist{
    width:0;
    height:0;
    margin-right:5px;
    border-left:6px solid transparent;
    border-bottom:6px solid #333;
}
.info{
    margin:-9px 0 0 4px;
}
.col-ico{
    margin-left:2px;
}
.sort{
    display:inline-block;
    width:0;
    height:0;
    margin-left:2px;
    vertical-align:1px;
    border-left:4px solid transparent;
    border-right:4px solid transparent;
}
.sort.down{
    border-top:4px solid #5b8fc8;
}
.sort.up{
    border-bottom:4px solid #5b8fc8;
}

/* right pane */
.sub-tabs{
    height:21px;
    margin-left:10px;
    gap:3px;
}
.sub-tabs .tab.active{
    height:24px;
}
.t-vis{width:85px;}
.t-uses{width:45px;}
.t-occ{width:84px;}
.t-attr{width:71px;}
.t-super{width:77px;margin-left:1px;}
.t-class{width:88px;margin-left:1px;}
.uses-bar{
    height:25px;
    display:flex;
    align-items:center;
    margin:1px 0 0 7px;
    padding-left:8px;
    background:#f0f0f0;
    white-space:nowrap;
    color:#222;
}
.ubtn{
    display:flex;
    align-items:center;
    gap:4px;
}
.ubtn.off{
    color:#8c8c8c;
}
.u-exist{margin-right:8px;}
.u-new{margin-right:8px;gap:5px;}
.u-multi{margin-right:8px;gap:5px;}
.u-rem{margin-right:8px;}
.ubar-sep{
    width:1px;
    height:16px;
    margin-right:4px;
    background:#c0c0c0;
}
.more{
    margin-left:auto;
    margin-right:6px;
    color:#1c3f8e;
    font-size:14px;
    font-weight:bold;
    line-height:14px;
}
.uses-grid{
    width:637px;
    margin-left:10px;
}
.uses-grid th{
    height:23px;
    padding-left:4px;
}
.uses-grid th:nth-child(1){width:31px;}
.uses-grid th:nth-child(2){width:162px;}
.uses-grid th:nth-child(3){width:102px;}
.uses-grid th:nth-child(4){width:82px;}
.uses-grid th:nth-child(5){width:82px;}
.uses-grid th:nth-child(6){width:83px;}
.uses-grid th:nth-child(7){width:62px;}
.uses-grid th:nth-child(8){width:33px;}
.uses-grid td{
    height:22px;
    padding-left:6px;
}
.uses-grid td:first-child{
    padding-left:5px;
}
.uses-grid .num-cell{
    padding-left:6px;
}
.uses-grid .edit{
    border:2px solid #cfcff2;
    padding-left:3px;
}
.add-row td{
    border-bottom:1px solid #e8e8e8;
}
.uses-grid .enter{
    padding-left:6px;
    border:1px solid #7fa8d4;
    color:#999;
}
```
